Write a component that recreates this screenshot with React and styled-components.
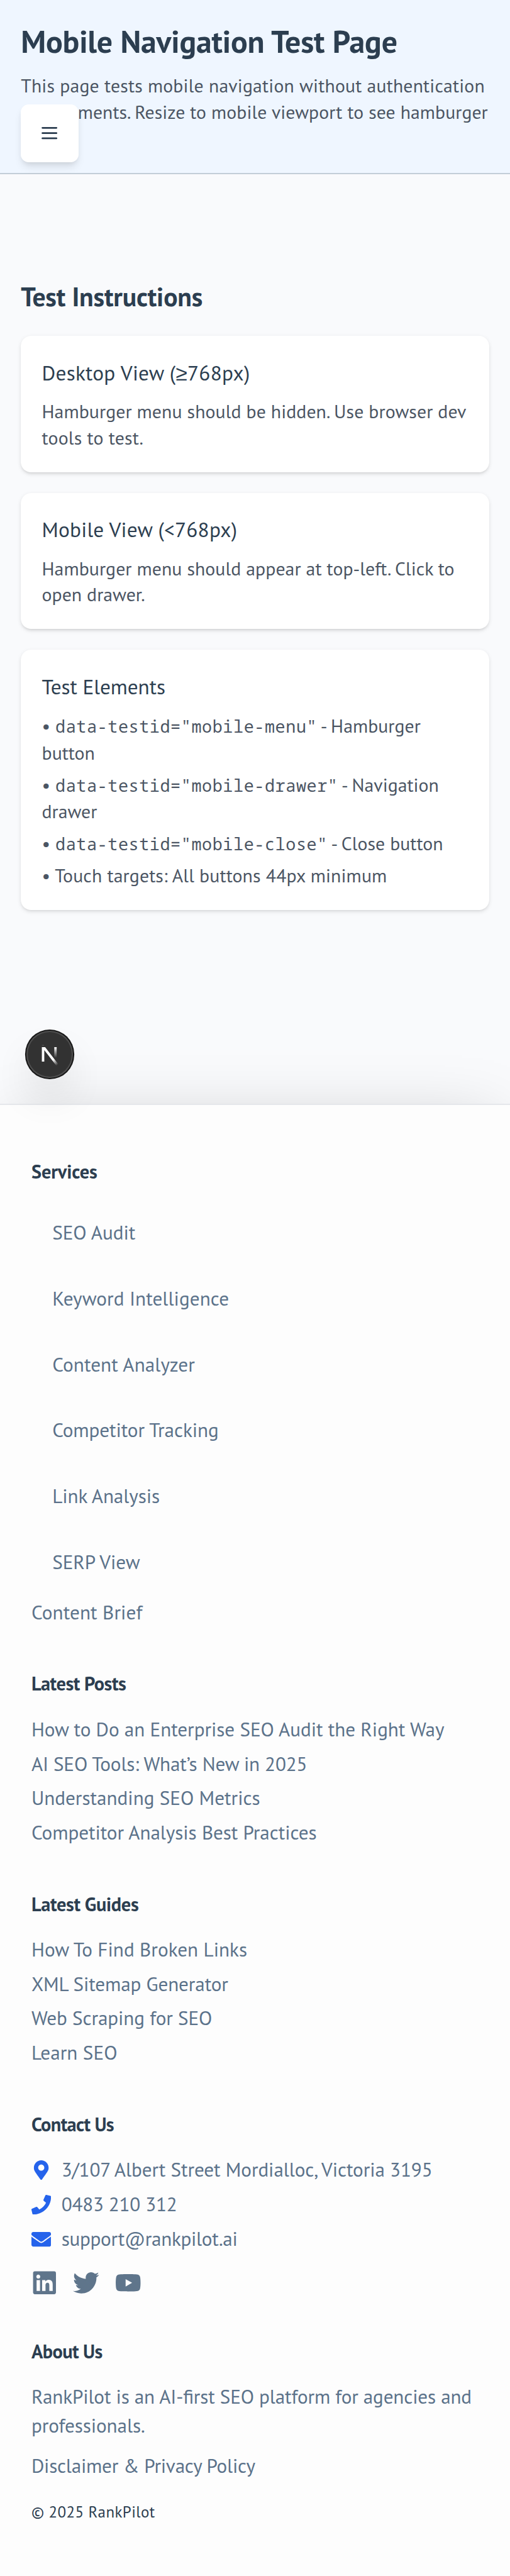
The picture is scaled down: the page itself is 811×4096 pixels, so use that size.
import React from 'react';
import styled, { createGlobalStyle } from 'styled-components';
import { FaMapMarkerAlt, FaPhone, FaEnvelope, FaLinkedin, FaTwitter, FaYoutube } from 'react-icons/fa';

/* 1rem is ten layout units of a 390-unit wide mobile page. */
const GlobalStyle = createGlobalStyle`
  html { font-size: 20.795px; }
  body { margin: 0; background: #fdfdfd; }
  *, *::before, *::after { box-sizing: border-box; }
  h1, h2, h3, h4, p, ul { margin: 0; padding: 0; list-style: none; }
  a { color: inherit; text-decoration: none; }
`;

const Page = styled.div`
  position: relative;
  width: 39rem;
  min-height: 196.96rem;
  overflow: hidden;
  font-family: "PT Sans", "Noto Sans", sans-serif;
  font-feature-settings: "liga" 1;
  color: #2c3e50;
  background: #f9fafc;
`;

const Line = styled.span`
  display: block;
  white-space: nowrap;
  letter-spacing: ${(p) => (p.$ls || 0) / 10}rem;
  line-height: ${(p) => (p.$lh ? `${p.$lh / 10}rem` : 'inherit')};
`;

const Header = styled.header`
  height: 13.3rem;
  padding: 1.6rem 1.6rem 0;
  background: #eff6ff;
  border-bottom: 0.1rem solid #c3cdd7;
`;

const PageTitle = styled.h1`
  font-size: 2.4rem;
  line-height: 3.2rem;
  font-weight: 700;
`;

const Intro = styled.p`
  margin-top: 0.8rem;
  font-size: 1.43rem;
  line-height: 2rem;
  color: #4b5563;
`;

const MenuButton = styled.button`
  position: absolute;
  top: 8rem;
  left: 1.6rem;
  display: flex;
  align-items: center;
  justify-content: center;
  width: 4.4rem;
  height: 4.4rem;
  padding: 0;
  border: 0;
  border-radius: 0.6rem;
  background: #fff;
  color: #2c3e50;
  box-shadow: 0 0.4rem 0.6rem -0.1rem rgba(0, 0, 0, 0.1), 0 0.2rem 0.4rem -0.2rem rgba(0, 0, 0, 0.1);
  svg { width: 1.6rem; height: 1.6rem; }
`;

const Main = styled.main`
  height: 71.1rem;
  padding: 8rem 1.6rem 0;
`;

const SectionTitle = styled.h2`
  margin-bottom: 1.6rem;
  font-size: 2rem;
  line-height: 2.8rem;
  font-weight: 700;
`;

const CardStack = styled.div`
  display: flex;
  flex-direction: column;
  gap: 1.6rem;
`;

const Card = styled.section`
  padding: 1.6rem;
  border-radius: 0.8rem;
  background: #fff;
  box-shadow: 0 0.1rem 0.3rem rgba(0, 0, 0, 0.1), 0 0.1rem 0.2rem -0.1rem rgba(0, 0, 0, 0.1);
`;

const CardTitle = styled.h3`
  margin-bottom: 0.8rem;
  font-size: 1.6rem;
  line-height: 2.4rem;
  font-weight: 400;
`;

const MathSign = styled.span`
  font-family: "Noto Sans", sans-serif;
  line-height: 1;
`;

const CardText = styled.div`
  display: flex;
  flex-direction: column;
  gap: 0.4rem;
  font-size: 1.435rem;
  line-height: 2rem;
  color: #4b5563;
`;

const Code = styled.code`
  font-family: "Noto Sans Mono", "DejaVu Sans Mono", monospace;
  font-size: 1.29rem;
  letter-spacing: 0.027rem;
  line-height: 1;
`;

const DevBadge = styled.div`
  position: absolute;
  top: 78.8rem;
  left: 2rem;
  z-index: 2;
  width: 3.6rem;
  height: 3.6rem;
  border-radius: 50%;
  background: #323232;
  box-shadow: 0 0 0 0.1rem #171717, inset 0 0 0 0.1rem rgba(255, 255, 255, 0.14),
    0 1.6rem 3.2rem -0.8rem rgba(0, 0, 0, 0.24);
  svg { display: block; width: 3.6rem; height: 3.6rem; }
`;

const Footer = styled.footer`
  position: relative;
  height: 112.6rem;
  padding: 3.97rem 2.4rem 0;
  border-top: 0.1rem solid #e5e7eb;
  background: #fdfdfd;
  box-shadow: 0 0.7rem 5rem -1.2rem rgba(0, 0, 0, 0.25);
`;

const FooterGroup = styled.section`
  margin-bottom: ${(p) => p.$after / 10}rem;
`;

const FooterTitle = styled.h4`
  margin-bottom: ${(p) => (p.$after || 10.6) / 10}rem;
  font-size: 1.46rem;
  line-height: 2.24rem;
  font-weight: 700;
`;

const FooterList = styled.ul`
  font-size: 1.5rem;
  line-height: 2.64rem;
  color: #5b728a;
`;

const IndentedItem = styled.li`
  padding-left: 1.6rem;
  line-height: 5.036rem;
`;

const ContactItem = styled.li`
  display: flex;
  align-items: center;
  gap: 0.8rem;
  height: 2.64rem;
  svg { flex: none; width: 1.5rem; height: 1.5rem; color: #2563eb; }
`;

const SocialRow = styled.div`
  display: flex;
  gap: 1.2rem;
  margin-top: 1rem;
  color: #5f758b;
  svg { display: block; width: 2rem; height: 2rem; }
`;

const FooterText = styled.p`
  margin-bottom: ${(p) => p.$after / 10}rem;
  font-size: 1.5rem;
  line-height: 2.24rem;
  color: #5b728a;
`;

const Copyright = styled.p`
  font-size: 1.2rem;
  line-height: 1.92rem;
`;

const MenuIcon = () => (
  <svg viewBox="0 0 24 24" fill="none" stroke="currentColor" strokeWidth="2" strokeLinecap="round">
    <path d="M4 6h16M4 12h16M4 18h16" />
  </svg>
);

const NextMark = () => (
  <svg viewBox="0 0 36 36" fill="none">
    <defs>
      <linearGradient id="diagonal" x1="9.956" y1="11.123" x2="15.478" y2="17.967" gradientUnits="userSpaceOnUse">
        <stop stopColor="#fff" />
        <stop offset="0.604" stopColor="#fff" stopOpacity="0" />
        <stop offset="1" stopColor="#fff" stopOpacity="0" />
      </linearGradient>
      <linearGradient id="bar" x1="11.82" y1="1.4" x2="11.79" y2="9.625" gradientUnits="userSpaceOnUse">
        <stop stopColor="#fff" />
        <stop offset="1" stopColor="#fff" stopOpacity="0" />
      </linearGradient>
      <clipPath id="flatTop">
        <rect x="0" y="1.5" width="16" height="16" />
      </clipPath>
    </defs>
    <g transform="translate(10.4 11)">
      <path d="M13.3 15.2 2.34 1v11.6" stroke="url(#diagonal)" strokeWidth="1.86" clipPath="url(#flatTop)" />
      <path d="M11.825 1.5v11.6" stroke="url(#bar)" strokeWidth="1.86" />
      <path d="M1.5 0.1h1.5" stroke="#fff" strokeOpacity="0.3" strokeWidth="0.35" />
    </g>
  </svg>
);

const testIds = [
  { id: 'mobile-menu', tail: ' - Hamburger', rest: 'button' },
  { id: 'mobile-drawer', tail: ' - Navigation', rest: 'drawer' },
  { id: 'mobile-close', tail: ' - Close button' },
];

const services = [
  ['SEO Audit', -0.03],
  ['Keyword Intelligence', 0.02],
  ['Content Analyzer', 0.037],
  ['Competitor Tracking', -0.057],
  ['Link Analysis', -0.033],
  ['SERP View', -0.027],
];

const posts = [
  ['How to Do an Enterprise SEO Audit the Right Way', -0.03],
  ['AI SEO Tools: What’s New in 2025', -0.09],
  ['Understanding SEO Metrics', -0.01],
  ['Competitor Analysis Best Practices', -0.04],
];

const guides = [
  ['How To Find Broken Links', 0.01],
  ['XML Sitemap Generator', -0.059],
  ['Web Scraping for SEO', -0.05],
  ['Learn SEO', 0.03],
];

const contacts = [
  [FaMapMarkerAlt, '3/107 Albert Street Mordialloc, Victoria 3195', -0.05],
  [FaPhone, '0483 210 312', -0.117],
  [FaEnvelope, 'support@rankpilot.ai', -0.159],
];

const LinkList = ({ items }) => (
  <FooterList>
    {items.map(([label, ls]) => (
      <li key={label}>
        <Line as="a" $ls={ls}>{label}</Line>
      </li>
    ))}
  </FooterList>
);

export default function App() {
  return (
    <Page>
      <GlobalStyle />
      <Header>
        <PageTitle><Line $ls={-0.091}>Mobile Navigation Test Page</Line></PageTitle>
        <Intro>
          <Line $ls={0.085}>This page tests mobile navigation without authentication</Line>
          <Line $ls={0.03}>requirements. Resize to mobile viewport to see hamburger</Line>
          <Line>menu.</Line>
        </Intro>
      </Header>
      <MenuButton aria-label="Open menu"><MenuIcon /></MenuButton>

      <Main>
        <SectionTitle><Line $ls={-0.081}>Test Instructions</Line></SectionTitle>
        <CardStack>
          <Card>
            <CardTitle><Line $ls={0.12}>Desktop View (<MathSign>≥</MathSign>768px)</Line></CardTitle>
            <CardText>
              <div>
                <Line $ls={0.02}>Hamburger menu should be hidden. Use browser dev</Line>
                <Line $ls={0.08}>tools to test.</Line>
              </div>
            </CardText>
          </Card>
          <Card>
            <CardTitle><Line $ls={0.099}>Mobile View (&lt;768px)</Line></CardTitle>
            <CardText>
              <div>
                <Line $ls={0.015}>Hamburger menu should appear at top-left. Click to</Line>
                <Line>open drawer.</Line>
              </div>
            </CardText>
          </Card>
          <Card>
            <CardTitle><Line $ls={-0.03}>Test Elements</Line></CardTitle>
            <CardText as="ul">
              {testIds.map(({ id, tail, rest }) => (
                <li key={id}>
                  <Line $lh={21}>• <Code>{`data-testid="${id}"`}</Code>{tail}</Line>
                  {rest && <Line>{rest}</Line>}
                </li>
              ))}
              <li><Line $ls={0.05}>• Touch targets: All buttons 44px minimum</Line></li>
            </CardText>
          </Card>
        </CardStack>
      </Main>

      <DevBadge><NextMark /></DevBadge>

      <Footer>
        <FooterGroup $after={30.1}>
          <FooterTitle><Line $ls={-0.05}>Services</Line></FooterTitle>
          <FooterList>
            {services.map(([label, ls]) => (
              <IndentedItem key={label}><Line as="a" $ls={ls}>{label}</Line></IndentedItem>
            ))}
            <li><Line as="a" $ls={0.04}>Content Brief</Line></li>
          </FooterList>
        </FooterGroup>
        <FooterGroup $after={30.4}>
          <FooterTitle><Line $ls={-0.24}>Latest Posts</Line></FooterTitle>
          <LinkList items={posts} />
        </FooterGroup>
        <FooterGroup $after={30.4}>
          <FooterTitle $after={9.9}><Line $ls={-0.16}>Latest Guides</Line></FooterTitle>
          <LinkList items={guides} />
        </FooterGroup>
        <FooterGroup $after={31.3}>
          <FooterTitle $after={10.3}><Line $ls={-0.32}>Contact Us</Line></FooterTitle>
          <FooterList>
            {contacts.map(([Icon, label, ls]) => (
              <ContactItem key={label}>
                <Icon />
                <Line $ls={ls}>{label}</Line>
              </ContactItem>
            ))}
          </FooterList>
          <SocialRow><FaLinkedin /><FaTwitter /><FaYoutube /></SocialRow>
        </FooterGroup>
        <FooterGroup $after={0}>
          <FooterTitle $after={12.3}><Line $ls={-0.27}>About Us</Line></FooterTitle>
          <FooterText $after={8.2}>
            <Line $ls={-0.08}>RankPilot is an AI-first SEO platform for agencies and</Line>
            <Line $ls={-0.05}>professionals.</Line>
          </FooterText>
          <FooterText $after={14.6}>
            <Line as="a" $ls={-0.122}>Disclaimer &amp; Privacy Policy</Line>
          </FooterText>
          <Copyright><Line $ls={0.2}>© 2025 RankPilot</Line></Copyright>
        </FooterGroup>
      </Footer>
    </Page>
  );
}
